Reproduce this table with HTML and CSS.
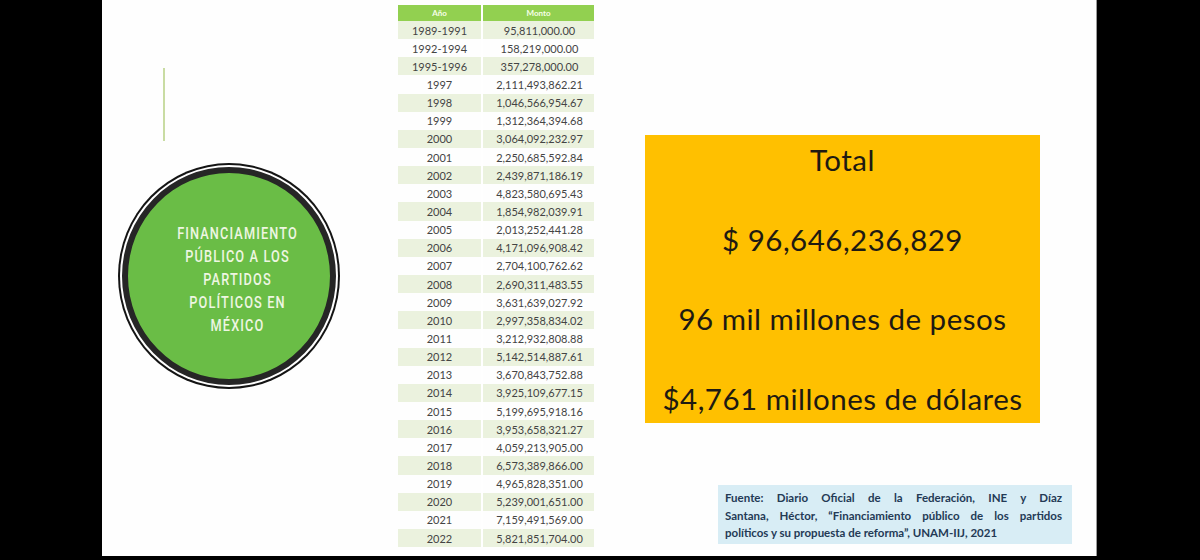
FILE: index.html
```html
<!DOCTYPE html>
<html lang="es">
<head>
<meta charset="utf-8">
<link rel="stylesheet" href="styles.css">
</head>
<body>
<div class="stage">
  <div class="slide">
    <div class="left-col">
      <div class="accent-line"></div>
      <div class="circle">
        <div class="circle-text">FINANCIAMIENTO<br>PÚBLICO A LOS<br>PARTIDOS<br>POLÍTICOS EN<br>MÉXICO</div>
      </div>
    </div>
    <div class="table-col">
      <table class="data">
        <thead>
          <tr><th>Año</th><th>Monto</th></tr>
        </thead>
        <tbody>
          <tr><td>1989-1991</td><td>95,811,000.00</td></tr>
          <tr><td>1992-1994</td><td>158,219,000.00</td></tr>
          <tr><td>1995-1996</td><td>357,278,000.00</td></tr>
          <tr><td>1997</td><td>2,111,493,862.21</td></tr>
          <tr><td>1998</td><td>1,046,566,954.67</td></tr>
          <tr><td>1999</td><td>1,312,364,394.68</td></tr>
          <tr><td>2000</td><td>3,064,092,232.97</td></tr>
          <tr><td>2001</td><td>2,250,685,592.84</td></tr>
          <tr><td>2002</td><td>2,439,871,186.19</td></tr>
          <tr><td>2003</td><td>4,823,580,695.43</td></tr>
          <tr><td>2004</td><td>1,854,982,039.91</td></tr>
          <tr><td>2005</td><td>2,013,252,441.28</td></tr>
          <tr><td>2006</td><td>4,171,096,908.42</td></tr>
          <tr><td>2007</td><td>2,704,100,762.62</td></tr>
          <tr><td>2008</td><td>2,690,311,483.55</td></tr>
          <tr><td>2009</td><td>3,631,639,027.92</td></tr>
          <tr><td>2010</td><td>2,997,358,834.02</td></tr>
          <tr><td>2011</td><td>3,212,932,808.88</td></tr>
          <tr><td>2012</td><td>5,142,514,887.61</td></tr>
          <tr><td>2013</td><td>3,670,843,752.88</td></tr>
          <tr><td>2014</td><td>3,925,109,677.15</td></tr>
          <tr><td>2015</td><td>5,199,695,918.16</td></tr>
          <tr><td>2016</td><td>3,953,658,321.27</td></tr>
          <tr><td>2017</td><td>4,059,213,905.00</td></tr>
          <tr><td>2018</td><td>6,573,389,866.00</td></tr>
          <tr><td>2019</td><td>4,965,828,351.00</td></tr>
          <tr><td>2020</td><td>5,239,001,651.00</td></tr>
          <tr><td>2021</td><td>7,159,491,569.00</td></tr>
          <tr><td>2022</td><td>5,821,851,704.00</td></tr>
        </tbody>
      </table>
    </div>
    <div class="right-col">
      <div class="total-box">
        <p class="total-line">Total</p>
        <p class="total-line">$ 96,646,236,829</p>
        <p class="total-line">96 mil millones de pesos</p>
        <p class="total-line">$4,761 millones de dólares</p>
      </div>
      <div class="source">
        <span class="src-line just">Fuente: Diario Oficial de la Federación, INE y Díaz</span>
        <span class="src-line just">Santana, Héctor, “Financiamiento público de los partidos</span>
        <span class="src-line">políticos y su propuesta de reforma”, UNAM-IIJ, 2021</span>
      </div>
    </div>
  </div>
</div>
</body>
</html>
```

FILE: styles.css
```css
* { box-sizing: border-box; }

html, body {
  margin: 0;
  padding: 0;
  background: #000;
}

.stage {
  width: 1200px;
  height: 560px;
  background: #000;
  padding-left: 102px;
}

.slide {
  width: 995px;
  height: 556px;
  background: #fefefe;
  display: flex;
  border-right: 1px solid #9a9a9a;
}

/* Left column */
.left-col {
  width: 296px;
  flex: none;
  display: flex;
  flex-direction: column;
  align-items: flex-start;
  padding-top: 68px;
}

.accent-line {
  width: 2px;
  height: 73px;
  background: #c9dca3;
  margin-left: 61px;
}

.circle {
  margin-top: 26px;
  margin-left: 20px;
  width: 214px;
  height: 218px;
  border-radius: 50%;
  background: #6abd46;
  border: 6px solid #262626;
  box-shadow: 0 0 0 2px #ffffff, 0 0 0 4px #141414;
  display: flex;
  align-items: center;
  justify-content: center;
}

.circle-text {
  font-family: "Roboto", "DejaVu Sans", sans-serif;
  font-weight: 500;
  font-size: 17px;
  line-height: 23px;
  letter-spacing: 1.5px;
  color: #eef6e2;
  text-align: center;
  white-space: nowrap;
  margin-top: 6px;
  margin-left: 18px;
  transform: scaleX(0.75);
}

/* Table column */
.table-col {
  width: 196px;
  flex: none;
  padding-top: 5px;
}

.data {
  width: 196px;
  border-collapse: collapse;
  font-family: "Lato", "Liberation Sans", sans-serif;
  color: #444;
  font-size: 11px;
}

.data th {
  background: #92d050;
  color: #f6ffe8;
  font-size: 8px;
  font-weight: 700;
  height: 16px;
  padding: 0;
}

.data th:first-child,
.data td:first-child {
  width: 84px;
  border-right: 2px solid #ffffff;
}

.data td {
  height: 18.15px;
  padding: 0;
  text-align: center;
}

.data td:last-child {
  padding-left: 2px;
}

.data tbody tr:nth-child(odd) td {
  background: #ebf2de;
}

/* Right column */
.right-col {
  flex: 1;
  display: flex;
  flex-direction: column;
  align-items: flex-start;
  padding-top: 135px;
}

.total-box {
  margin-left: 51px;
  width: 395px;
  height: 288px;
  background: #ffc000;
  display: flex;
  flex-direction: column;
  align-items: center;
  gap: 41.5px;
  padding-top: 6px;
  font-family: "Lato", "Liberation Sans", sans-serif;
  color: #1e1a12;
}

.total-line {
  margin: 0;
  flex: none;
  font-size: 29.5px;
  line-height: 38px;
  letter-spacing: 0.5px;
}

.source {
  margin-top: 62px;
  margin-left: 124px;
  width: 354px;
  height: 59px;
  background: #d8edf5;
  padding: 4px 10px 0 7px;
  font-family: "Lato", "Liberation Sans", sans-serif;
  font-weight: 700;
  font-size: 11.5px;
  line-height: 17.5px;
  color: #243a55;
}

.src-line {
  display: block;
  white-space: nowrap;
}

.src-line.just {
  text-align: justify;
  text-align-last: justify;
}
```
